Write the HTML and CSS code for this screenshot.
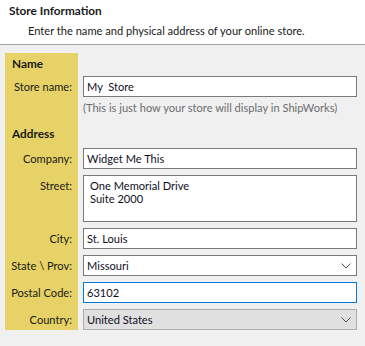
FILE: index.html
```html
<!DOCTYPE html>
<html>
  <head>
    <meta charset="utf-8">
    <title>Store Information</title>
    <link rel="stylesheet" href="styles.css">
  </head>
  <body>
    <!-- Wizard page header -->
    <div class="header">
      <div class="header-title">Store Information</div>
      <div class="header-sub">Enter the name and physical address of your online store.</div>
    </div>

    <div class="content">
      <div class="form">
        <div class="label heading">Name</div>
        <div class="cell"></div>

        <div class="label">Store name:</div>
        <div class="cell tight"><div class="box">My&nbsp; Store</div></div>

        <div class="label"></div>
        <div class="cell hint">(This is just how your store will display in ShipWorks)</div>

        <div class="label heading address">Address</div>
        <div class="cell"></div>

        <div class="label">Company:</div>
        <div class="cell"><div class="box">Widget Me This</div></div>

        <div class="label">Street:</div>
        <div class="cell"><div class="box multi">One Memorial Drive<br>Suite 2000</div></div>

        <div class="label">City:</div>
        <div class="cell"><div class="box">St. Louis</div></div>

        <div class="label">State \ Prov:</div>
        <div class="cell">
          <div class="box combo">
            <span>Missouri</span>
            <svg class="chevron" width="10" height="6" viewBox="0 0 10 6"><path d="M0.5 0.5 L5 5 L9.5 0.5" fill="none" stroke="#555" stroke-width="1"/></svg>
          </div>
        </div>

        <div class="label">Postal Code:</div>
        <div class="cell"><div class="box focus">63102</div></div>

        <div class="label">Country:</div>
        <div class="cell tight">
          <div class="box combo disabled">
            <span>United States</span>
            <svg class="chevron" width="10" height="6" viewBox="0 0 10 6"><path d="M0.5 0.5 L5 5 L9.5 0.5" fill="none" stroke="#555" stroke-width="1"/></svg>
          </div>
        </div>
      </div>
    </div>
  </body>
</html>
```

FILE: styles.css
```css
body, html {
  margin: 0;
  padding: 0;
  width: 100%;
  height: 100%;
  overflow: hidden;
  background-color: #f0f0f0;
  font-family: Lato, "Noto Sans", sans-serif;
  font-size: 11.1px;
  color: #1a1a1a;
}

.header {
  background-color: #fff;
  height: 45px;
  border-bottom: 1px solid #a0a0a0;
  box-sizing: border-box;
  padding: 3px 0 0 9px;
}

.header-title {
  font-weight: bold;
  font-size: 11.8px;
  line-height: 16px;
}

.header-sub {
  padding: 4px 0 0 19px;
  line-height: 16px;
}

.content {
  padding: 8px 0 0 5px;
}

.form {
  display: grid;
  grid-template-columns: 73px 274px;
  column-gap: 5px;
}

.label {
  background-color: #e6d266;
  text-align: right;
  padding: 3px 6px 0 0;
  line-height: 15px;
  white-space: nowrap;
}

.label.heading {
  text-align: left;
  font-weight: bold;
  font-size: 11.8px;
  padding: 3px 0 0 7px;
  height: 20px;
}

.label.address {
  padding-top: 11px;
  height: 22px;
}

.cell {
  padding-bottom: 6px;
}

.cell.tight {
  padding-bottom: 0;
}

.hint {
  color: #6d6d6d;
  padding: 3px 0 0 0;
  line-height: 15px;
  white-space: nowrap;
}

.box {
  height: 21px;
  box-sizing: border-box;
  border: 1px solid #7a7a7a;
  background-color: #fff;
  padding: 2px 3px;
  line-height: 15px;
  color: #0f0f1e;
  white-space: nowrap;
}

.box.multi {
  height: 47px;
  padding: 3px 6px;
  line-height: 13px;
}

.box.focus {
  border-color: #0078d7;
}

.combo {
  display: flex;
  align-items: center;
  justify-content: space-between;
  padding: 0 5px 0 3px;
}

.combo.disabled {
  background-color: #e0e0e0;
  border-color: #adadad;
}

.chevron {
  display: block;
}
```
